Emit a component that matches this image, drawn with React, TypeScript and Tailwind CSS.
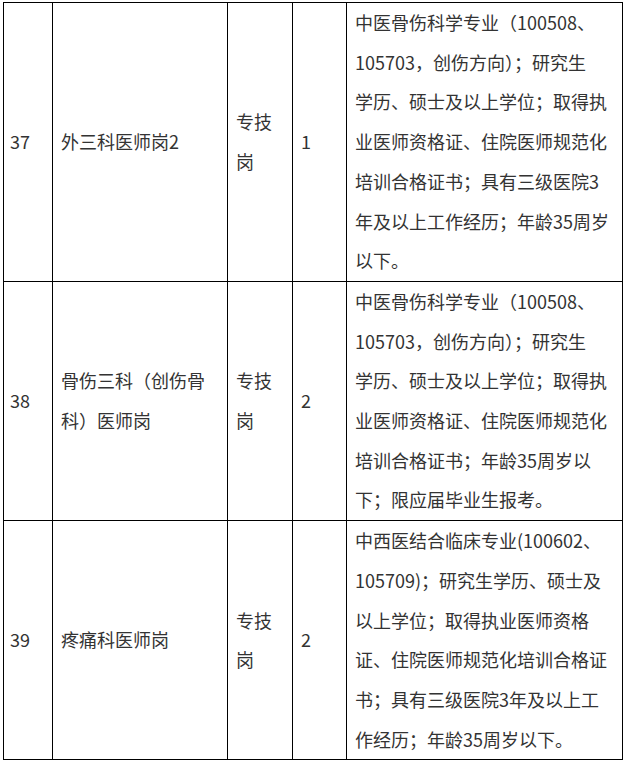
import React from 'react';

interface Post {
  no: string;
  name: React.ReactNode;
  kind: React.ReactNode;
  count: string;
  lines: string[];
}

const posts: Post[] = [
  {
    no: '37',
    name: '外三科医师岗2',
    kind: (
      <>
        专技
        <br />岗
      </>
    ),
    count: '1',
    lines: [
      '中医骨伤科学专业（100508、',
      '105703，创伤方向）；研究生',
      '学历、硕士及以上学位；取得执',
      '业医师资格证、住院医师规范化',
      '培训合格证书；具有三级医院3',
      '年及以上工作经历；年龄35周岁',
      '以下。',
    ],
  },
  {
    no: '38',
    name: (
      <>
        骨伤三科（创伤骨
        <br />
        科）医师岗
      </>
    ),
    kind: (
      <>
        专技
        <br />岗
      </>
    ),
    count: '2',
    lines: [
      '中医骨伤科学专业（100508、',
      '105703，创伤方向）；研究生',
      '学历、硕士及以上学位；取得执',
      '业医师资格证、住院医师规范化',
      '培训合格证书；年龄35周岁以',
      '下；限应届毕业生报考。',
    ],
  },
  {
    no: '39',
    name: '疼痛科医师岗',
    kind: (
      <>
        专技
        <br />岗
      </>
    ),
    count: '2',
    lines: [
      '中西医结合临床专业(100602、',
      '105709)；研究生学历、硕士及',
      '以上学位；取得执业医师资格',
      '证、住院医师规范化培训合格证',
      '书；具有三级医院3年及以上工',
      '作经历；年龄35周岁以下。',
    ],
  },
];

const cell = 'border border-black align-middle pl-[8px] pr-[6px] py-0';

export default function App() {
  return (
    <div
      className="bg-white min-h-[763px] pt-[2px] pl-[3px] text-[#333] text-[18px] leading-[39.7px]"
      style={{ fontFamily: '"Microsoft YaHei", "Noto Sans CJK SC", "Noto Sans", sans-serif' }}
    >
      <table className="table-fixed border-collapse w-[619px]">
        <colgroup>
          <col className="w-[49px]" />
          <col className="w-[175px]" />
          <col className="w-[65px]" />
          <col className="w-[54px]" />
          <col className="w-[276px]" />
        </colgroup>
        <tbody>
          {posts.map((p) => (
            <tr key={p.no}>
              <td className="border border-black align-middle pl-[6px] py-0">{p.no}</td>
              <td className={cell}>{p.name}</td>
              <td className={cell}>{p.kind}</td>
              <td className={cell}>{p.count}</td>
              <td className={`${cell} whitespace-nowrap`}>
                {p.lines.map((l, i) => (
                  <div key={i}>{l}</div>
                ))}
              </td>
            </tr>
          ))}
        </tbody>
      </table>
    </div>
  );
}
